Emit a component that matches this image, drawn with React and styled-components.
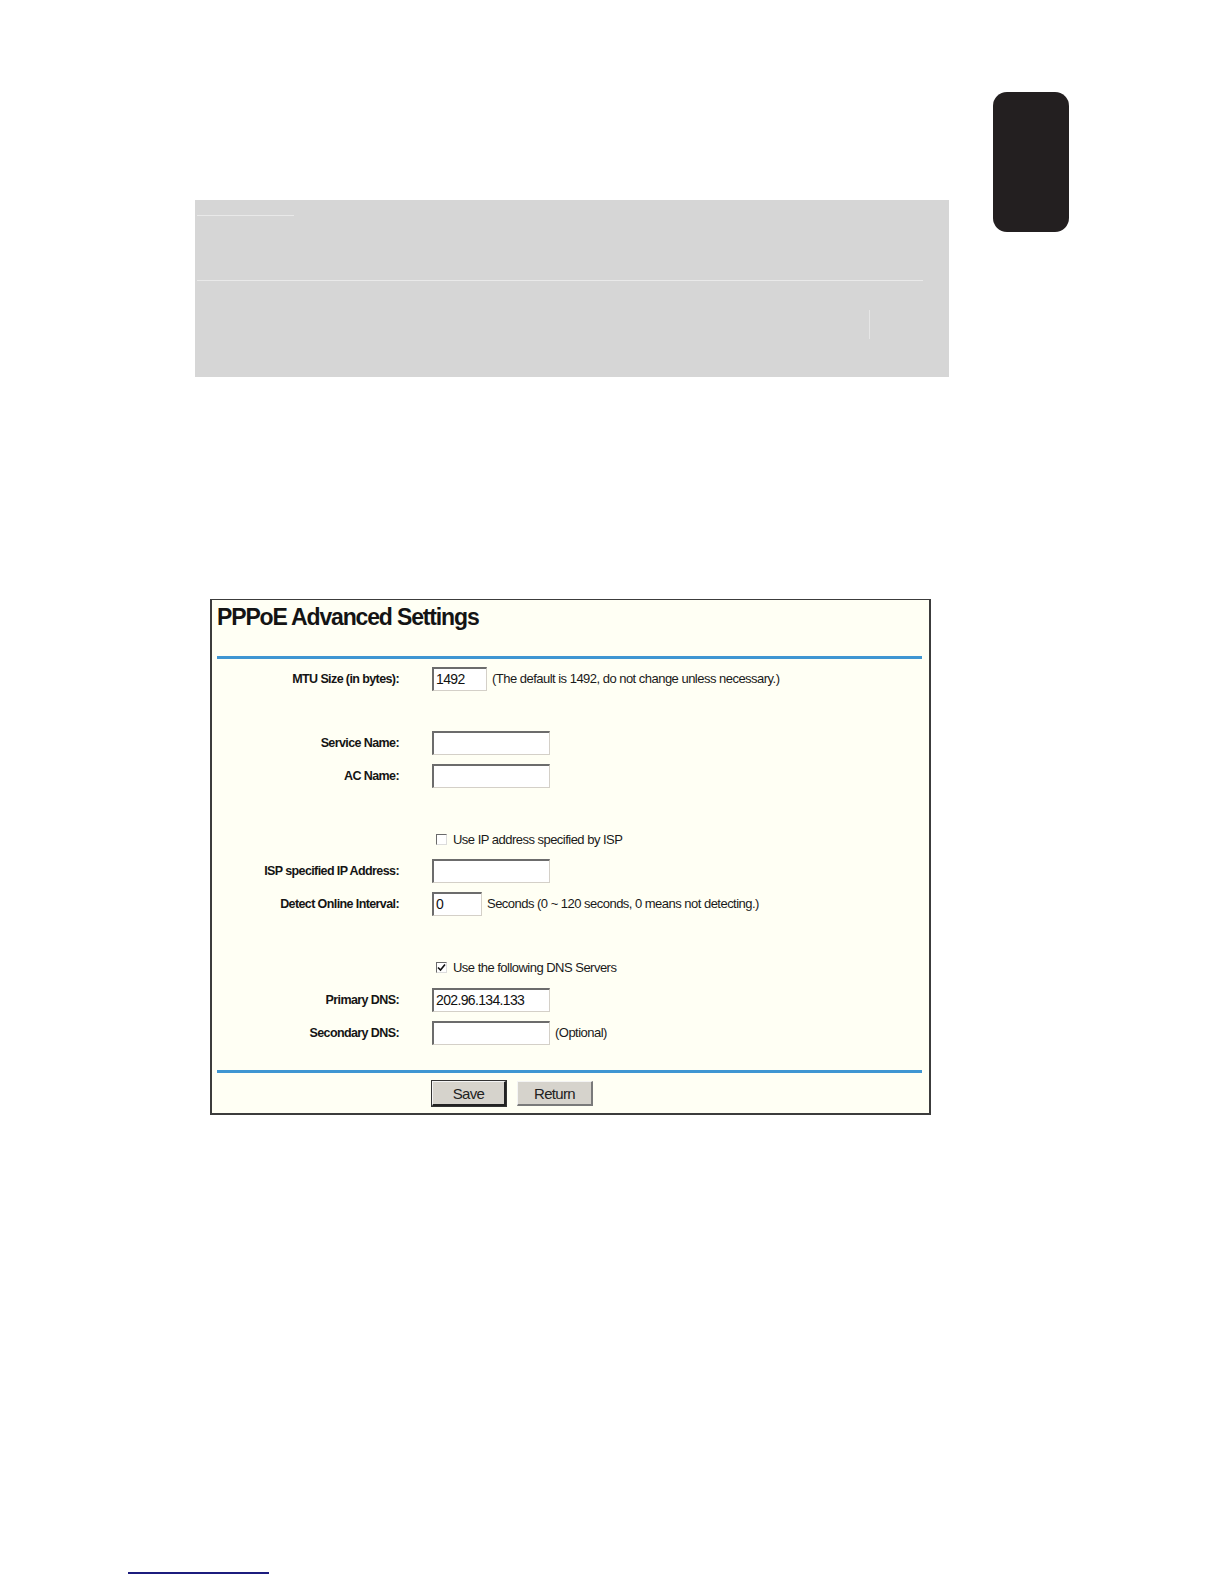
import React from "react";
import styled, { createGlobalStyle } from "styled-components";

const Global = createGlobalStyle`
  html, body { margin: 0; padding: 0; background: #ffffff; }
  body { font-family: "Liberation Sans", Arial, sans-serif; color: #111; }
  * { box-sizing: border-box; }
`;

const Page = styled.div`
  width: 1224px;
  min-height: 1584px;
  background: #ffffff;
  display: flex;
  flex-direction: column;
`;

const TopArea = styled.div`
  display: flex;
  align-items: flex-start;
`;

const Content = styled.div`
  margin-left: 195px;
  padding-top: 200px;
  width: 754px;
  display: flex;
  flex-direction: column;
`;

const ThumbTab = styled.div`
  margin-left: 44px;
  margin-top: 92px;
  width: 76px;
  height: 140px;
  border-radius: 14px;
  background: #231f20;
`;

const GreyBox = styled.div`
  width: 754px;
  height: 177px;
  background: #d6d6d6;
  padding: 15px 2px 0 2px;
  display: flex;
  flex-direction: column;
`;

const FaintLine = styled.div`
  height: 1px;
  background: #e9e9e9;
  width: ${(p) => p.$w}px;
  margin-top: ${(p) => p.$mt || 0}px;
`;

const FaintTick = styled.div`
  width: 1px;
  height: 29px;
  background: #e6e6e6;
  margin-left: ${(p) => p.$ml}px;
  margin-top: ${(p) => p.$mt}px;
`;

const Panel = styled.div`
  margin-top: 222px;
  margin-left: 15px;
  width: 721px;
  background: #fffff4;
  border: 1px solid #3c3c3c;
  border-left-width: 2px;
  border-right-width: 2px;
  border-bottom-width: 2px;
  padding: 3px 7px 7px 5px;
  display: flex;
  flex-direction: column;
`;

const Title = styled.h1`
  margin: 0;
  font-family: "Liberation Sans", Arial, sans-serif;
  font-weight: bold;
  font-size: 23px;
  letter-spacing: -1.15px;
  line-height: 28px;
  color: #141414;
`;

const BlueRule = styled.div`
  height: 3px;
  background: #3f96d2;
  margin-top: ${(p) => p.$mt}px;
`;

const Row = styled.div`
  display: grid;
  grid-template-columns: 182px 1fr;
  column-gap: 33px;
  align-items: center;
  height: ${(p) => p.$h || 33}px;
  margin-top: ${(p) => p.$mt || 0}px;
`;

const Label = styled.div`
  text-align: right;
  font-weight: bold;
  font-size: 12.5px;
  letter-spacing: -0.6px;
  color: #151515;
  white-space: nowrap;
`;

const Field = styled.div`
  display: flex;
  align-items: center;
  gap: 5px;
`;

const Input = styled.div`
  width: ${(p) => p.$w}px;
  height: 24px;
  background: #ffffff;
  border-top: 2px solid #6c6c6c;
  border-left: 2px solid #6c6c6c;
  border-right: 1px solid #d4d0c8;
  border-bottom: 1px solid #d4d0c8;
  font-size: 14px;
  letter-spacing: -0.65px;
  line-height: 20px;
  padding-left: 2px;
  color: #111;
  white-space: nowrap;
`;

const Note = styled.span`
  font-size: 13px;
  letter-spacing: -0.52px;
  color: #1a1a1a;
  white-space: nowrap;
`;

const CheckWrap = styled.div`
  display: flex;
  align-items: center;
  gap: 6px;
  padding-left: 4px;
`;

const Box = styled.span`
  width: 11px;
  height: 11px;
  background: #ffffff;
  border-top: 1px solid #6a6a6a;
  border-left: 1px solid #6a6a6a;
  border-right: 1px solid #dcdcdc;
  border-bottom: 1px solid #dcdcdc;
  display: inline-flex;
  align-items: center;
  justify-content: center;
`;

const ButtonRow = styled.div`
  display: flex;
  gap: 11px;
  margin-top: 8px;
  padding-left: 215px;
`;

const Button = styled.div`
  width: ${(p) => p.$w}px;
  height: 25px;
  background: #d6d3cc;
  border-top: 1px solid #f4f4f4;
  border-left: 1px solid #f4f4f4;
  border-right: 2px solid ${(p) => (p.$primary ? "#222" : "#7a7a7a")};
  border-bottom: 2px solid ${(p) => (p.$primary ? "#222" : "#7a7a7a")};
  outline: ${(p) => (p.$primary ? "1px solid #333" : "none")};
  font-size: 15px;
  letter-spacing: -0.7px;
  color: #222;
  display: flex;
  align-items: center;
  justify-content: center;
`;

const FooterLine = styled.div`
  margin-top: 457px;
  margin-left: 128px;
  width: 141px;
  height: 2px;
  background: #1c1c7e;
`;

function Check({ checked }) {
  return (
    <Box>
      {checked && (
        <svg width="9" height="9" viewBox="0 0 9 9">
          <path d="M1 4.5 L3.5 7 L8 1.5" fill="none" stroke="#111" strokeWidth="1.6" />
        </svg>
      )}
    </Box>
  );
}

export default function App() {
  return (
    <Page>
      <Global />
      <TopArea>
        <Content>
          <GreyBox>
            <FaintLine $w={97} />
            <FaintLine $w={726} $mt={64} />
            <FaintTick $ml={672} $mt={29} />
          </GreyBox>
          <Panel>
            <Title>PPPoE Advanced Settings</Title>
            <BlueRule $mt={25} />
            <Row $mt={3}>
              <Label>MTU Size (in bytes):</Label>
              <Field>
                <Input $w={55}>1492</Input>
                <Note>(The default is 1492, do not change unless necessary.)</Note>
              </Field>
            </Row>
            <Row $mt={31}>
              <Label>Service Name:</Label>
              <Field>
                <Input $w={118} />
              </Field>
            </Row>
            <Row>
              <Label>AC Name:</Label>
              <Field>
                <Input $w={118} />
              </Field>
            </Row>
            <Row $mt={32} $h={30}>
              <span />
              <CheckWrap>
                <Check />
                <Note>Use IP address specified by ISP</Note>
              </CheckWrap>
            </Row>
            <Row>
              <Label>ISP specified IP Address:</Label>
              <Field>
                <Input $w={118} />
              </Field>
            </Row>
            <Row>
              <Label>Detect Online Interval:</Label>
              <Field>
                <Input $w={50}>0</Input>
                <Note>Seconds (0 ~ 120 seconds, 0 means not detecting.)</Note>
              </Field>
            </Row>
            <Row $mt={31} $h={32}>
              <span />
              <CheckWrap>
                <Check checked />
                <Note>Use the following DNS Servers</Note>
              </CheckWrap>
            </Row>
            <Row>
              <Label>Primary DNS:</Label>
              <Field>
                <Input $w={118}>202.96.134.133</Input>
              </Field>
            </Row>
            <Row>
              <Label>Secondary DNS:</Label>
              <Field>
                <Input $w={118} />
                <Note>(Optional)</Note>
              </Field>
            </Row>
            <BlueRule $mt={21} />
            <ButtonRow>
              <Button $w={74} $primary>Save</Button>
              <Button $w={76}>Return</Button>
            </ButtonRow>
          </Panel>
        </Content>
        <ThumbTab />
      </TopArea>
      <FooterLine />
    </Page>
  );
}
